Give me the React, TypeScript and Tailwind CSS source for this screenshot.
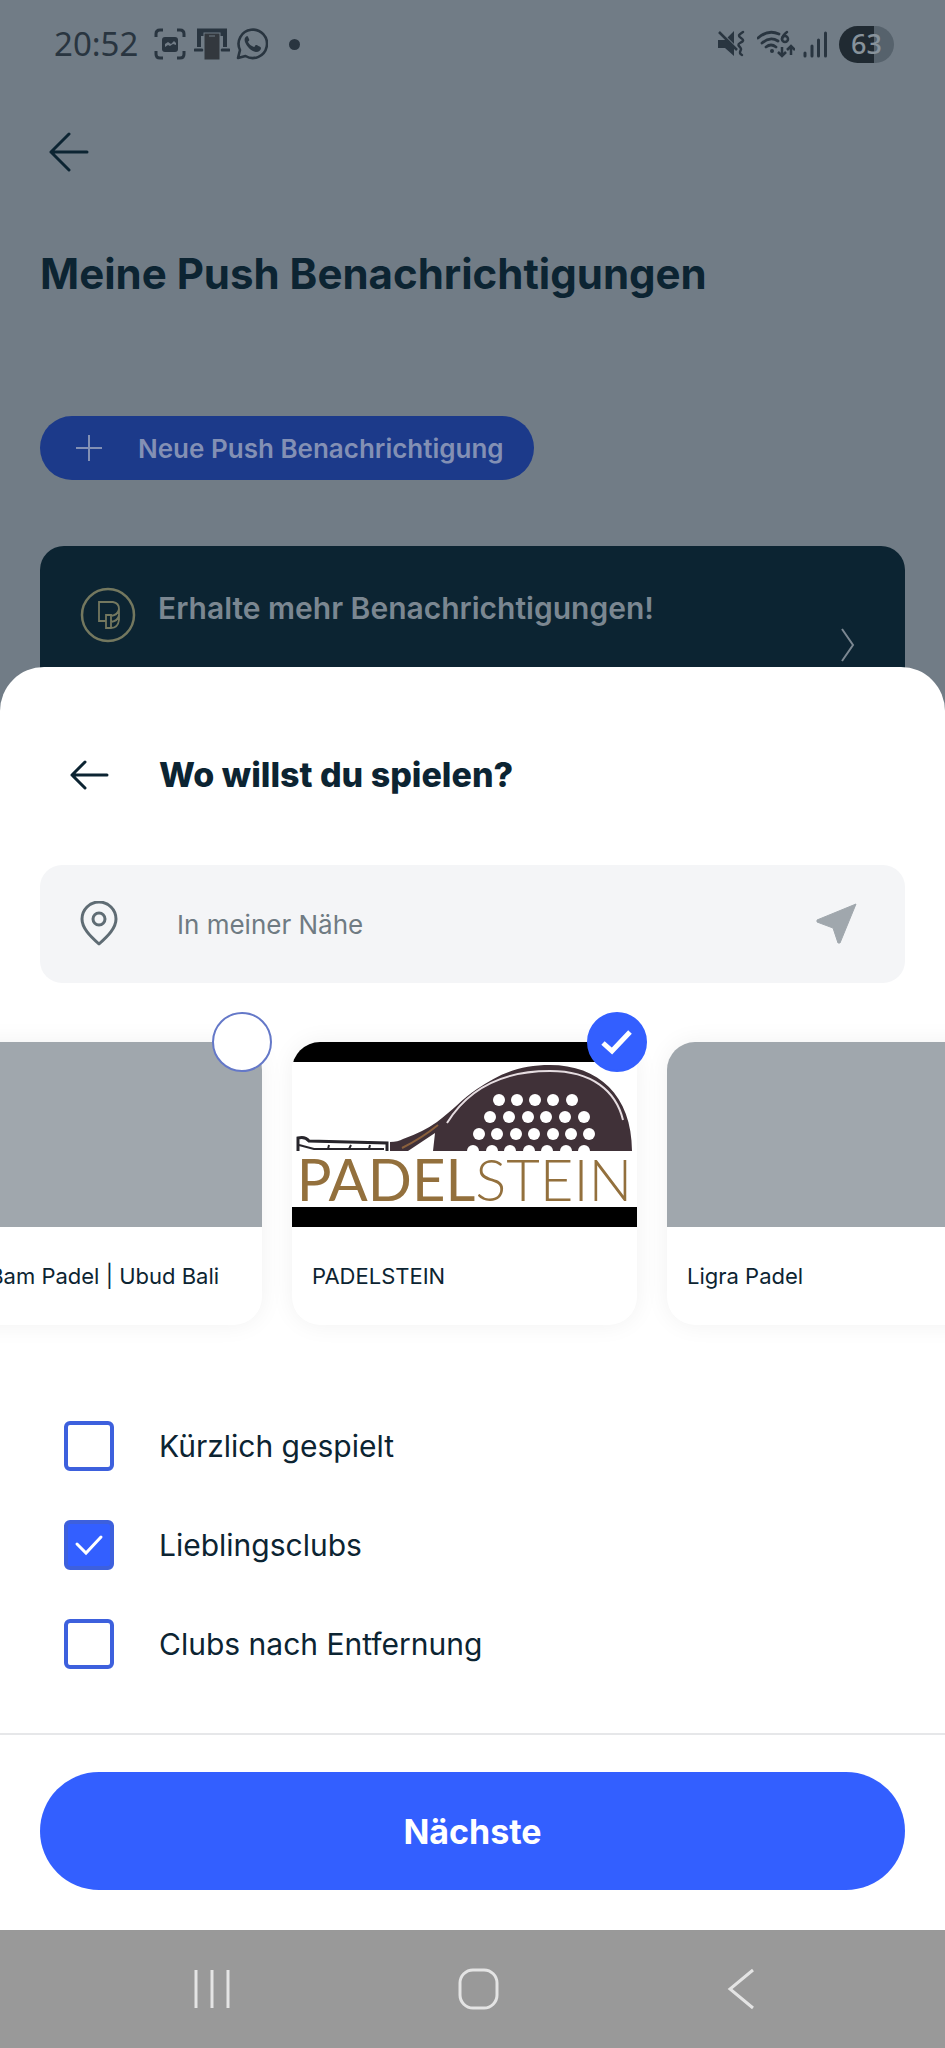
import React from "react";

const clubs = [
  { name: "Bam Bam Padel | Ubud Bali", selected: false, logo: false },
  { name: "PADELSTEIN", selected: true, logo: true },
  { name: "Ligra Padel", selected: false, logo: false },
];

const filters = [
  { id: "recent", label: "Kürzlich gespielt", checked: false },
  { id: "favorites", label: "Lieblingsclubs", checked: true },
  { id: "distance", label: "Clubs nach Entfernung", checked: false },
];

const holeRows = [
  { y: 58, xs: [207, 225, 243, 261, 280] },
  { y: 75, xs: [198, 217, 236, 254, 273, 292] },
  { y: 92, xs: [187, 205, 224, 242, 261, 279, 297] },
  { y: 109, xs: [181, 200, 218, 237, 255, 274, 292] },
];

const StatusBar = () => (
  <div className="flex h-[88px] items-center justify-between pl-[54px] pr-[51px] text-[#293540]">
    <div className="flex items-center">
      <span className="w-[84px] font-['Noto_Sans'] text-[33px] leading-[40px]">20:52</span>
      <svg className="ml-4 h-8 w-8" viewBox="0 0 32 32" fill="none">
        <path
          d="M2 9V6q0-4 4-4h3M23 2h3q4 0 4 4v3M30 23v3q0 4-4 4h-3M9 30H6q-4 0-4-4v-3"
          stroke="currentColor"
          strokeWidth="3"
        />
        <rect x="8" y="9" width="16" height="15" rx="3" fill="currentColor" />
        <path d="M11 19v-3l3-2 3 2 3-3 2 2v2l-3-1-3 2-2-1z" fill="#717c86" />
      </svg>
      <svg className="ml-2 h-8 w-9" viewBox="0 0 36 32" fill="none">
        <path d="M5 19V2.500h26V19" stroke="currentColor" strokeWidth="4" />
        <path d="M5 3h26v5H5z" fill="currentColor" />
        <path d="M1 22h7M28 22h7" stroke="currentColor" strokeWidth="3" strokeLinecap="round" />
        <rect x="10" y="5" width="16" height="27" fill="#33383e" stroke="#717c86" strokeWidth="1" />
        <path d="M15 8h6" stroke="#717c86" strokeWidth="1" />
      </svg>
      <svg className="ml-[6px] h-8 w-8" viewBox="0 0 32 32" fill="none">
        <path
          d="M2 30l2-8A14.200 14.200 0 1 1 9.500 28z"
          stroke="currentColor"
          strokeWidth="2.600"
          strokeLinejoin="round"
        />
        <path
          d="M11 8c-2 1-3 3-2 6 2 5 6 9 11 10 3 0 5-2 5-4 0-1-4-3-5-3s-1 2-2 2c-3-1-5-3-6-5 0-1 2-1 1-3-1-2-1-3-2-3z"
          fill="currentColor"
        />
      </svg>
      <span className="ml-[21px] size-[11px] rounded-full bg-current" />
    </div>

    <div className="flex items-center">
      <svg className="h-7 w-7" viewBox="0 0 28 28" fill="none">
        <path d="M1 10h7l9-9v25l-9-8H1z" fill="currentColor" />
        <path d="M0-1l20 20" stroke="#717c86" strokeWidth="3" />
        <path d="M2 2l18 18" stroke="currentColor" strokeWidth="2.500" />
        <path
          d="M26 2c-5 3-5 4-2 6s3 3-1 5 1 4 1 6-3 4 1 6"
          stroke="currentColor"
          strokeWidth="2.500"
          strokeLinecap="round"
        />
      </svg>
      <svg className="ml-3 h-7 w-[38px]" viewBox="0 0 38 28" fill="none" stroke="currentColor">
        <path d="M1 8Q11-1 22 4M5 13q8-7 16-2M9 17q5-4 10 0" strokeWidth="2.800" strokeLinecap="round" />
        <circle cx="15" cy="21" r="2" fill="currentColor" stroke="none" />
        <path d="M30 2q-5 4-5 7" strokeWidth="2.500" strokeLinecap="round" />
        <circle cx="28" cy="9" r="3" strokeWidth="2.500" />
        <path d="M25 17v9m-4-4l4 4 4-4M34 25v-9m-4 4l4-4 4 4" strokeWidth="2.500" />
      </svg>
      <svg className="ml-2 h-7 w-6" viewBox="0 0 24 28" stroke="currentColor" strokeWidth="3" strokeLinecap="round">
        <path d="M2 23v3M9 16v10M15.500 10v16M22.500 3v23" />
      </svg>
      <span className="ml-3 flex h-[37px] w-[55px] items-center justify-center rounded-full bg-linear-to-r from-[#202a32] from-63% to-[#56626c] to-63% font-['Noto_Sans'] text-[27px] font-medium text-[#87929b]">
        63
      </span>
    </div>
  </div>
);

const PadelsteinLogo = () => (
  <div className="flex h-full flex-col justify-between bg-white">
    <div className="h-5 bg-black" />
    <svg className="h-[89px] w-full" viewBox="0 20 345 89">
      <path
        d="M98 100q8 0 13-3 20-7 34-17c16-12 24-22 40-33 23-16 44-24 73-24 48 0 82 30 82 86H141l2-18-27 18H98z"
        fill="#403138"
      />
      <path d="M155 81C176 47 211 29 258 29c42 0 66 20 73 49" fill="none" stroke="#e6dde1" strokeWidth="2" />
      <path d="M110 106q20-10 36-23" fill="none" stroke="#8a603c" strokeWidth="2" />
      <path
        d="M6 109V96q7-2 11 3l78 2v8"
        fill="#fff"
        stroke="#27252b"
        strokeWidth="3"
      />
      <path d="M7 103l15 4h70M36 107l1-4M57 107l2-4M77 107l1-4" fill="none" stroke="#27252b" strokeWidth="2" />
      {holeRows.map((row) =>
        row.xs.map((x) => <circle key={`${row.y}-${x}`} cx={x} cy={row.y} r="6" fill="#fff" />)
      )}
    </svg>
    <div className="text-center font-['Lato'] text-[58px] font-normal leading-[56px] whitespace-nowrap text-[#93703d]">
      PADEL<span className="font-light">STEIN</span>
    </div>
    <div className="h-5 bg-black" />
  </div>
);

const ClubCard = ({ club }: { club: (typeof clubs)[number] }) => (
  <label className="relative w-[345px] shrink-0 rounded-[28px] bg-white shadow-[0_0_24px_rgba(0,0,0,0.06)]">
    <div className="h-[185px] overflow-hidden rounded-t-[28px] bg-[#a0a7ad]">
      {club.logo && <PadelsteinLogo />}
    </div>
    <div className="flex h-[98px] items-center pl-5 text-[22px] whitespace-nowrap">{club.name}</div>
    <input
      type="checkbox"
      defaultChecked={club.selected}
      className="peer absolute -top-[30px] -right-[10px] size-[60px] appearance-none rounded-full border-2 border-[#6478c8] bg-white checked:border-[#335fff] checked:bg-[#335fff]"
    />
    <svg
      className="pointer-events-none absolute -top-[30px] -right-[10px] hidden size-[60px] peer-checked:block"
      viewBox="0 0 60 60"
      fill="none"
    >
      <path d="M16 31l9 8 18-19" stroke="#fff" strokeWidth="5" />
    </svg>
  </label>
);

const App: React.FC = () => {
  return (
    <div className="flex min-h-screen flex-col overflow-hidden bg-[#717c86] font-['Inter',sans-serif] text-[#0c2432]">
      <StatusBar />

      <header className="px-10">
        <button type="button" aria-label="Zurück" className="mt-[44px] ml-[9px] block">
          <svg
            className="size-10"
            viewBox="0 0 40 40"
            fill="none"
            stroke="currentColor"
            strokeWidth="3"
            strokeLinecap="round"
            strokeLinejoin="round"
          >
            <path d="M38 20H2M20 2L2 20l18 18" />
          </svg>
        </button>
        <h1 className="mt-[76px] text-[42px] font-bold leading-[52px]">Meine Push Benachrichtigungen</h1>
        <button
          type="button"
          className="mt-[116px] flex h-16 items-center rounded-full bg-[#1c3a8a] pr-[30px] pl-9 text-[#8390b4]"
        >
          <svg className="size-[26px]" viewBox="0 0 26 26" stroke="currentColor" strokeWidth="2">
            <path d="M13 0v26M0 13h26" />
          </svg>
          <span className="ml-9 text-[26px] font-semibold">Neue Push Benachrichtigung</span>
        </button>
      </header>

      <section className="mx-10 mt-[66px] flex h-[166px] rounded-[24px] bg-[#0c2432] pr-[50px] pl-10 text-[#7b8791]">
        <svg className="mt-[41px] size-14 text-[#74785f]" viewBox="0 0 56 56" fill="none" stroke="currentColor">
          <circle cx="28" cy="28" r="26" strokeWidth="2.500" />
          <path
            d="M26 34h-7V15h14q6 1 6 7v11q-1 8-8 8h-5V28h5v13M31 29q7-1 8-7M31 35q7-1 8-7"
            strokeWidth="1.800"
          />
        </svg>
        <h2 className="mt-[42px] ml-[22px] text-[30px] font-semibold leading-[40px]">
          Erhalte mehr Benachrichtigungen!
        </h2>
        <svg className="mt-[82px] ml-auto h-[34px] w-[14px]" viewBox="0 0 14 34" fill="none">
          <path d="M1 1l11 16L1 33" stroke="currentColor" strokeWidth="2" />
        </svg>
      </section>

      <main className="relative -mt-[45px] flex flex-1 flex-col rounded-t-[44px] bg-white">
        <div className="flex items-center px-[69px] pt-[84px]">
          <button type="button" aria-label="Zurück">
            <svg
              className="h-[30px] w-10"
              viewBox="0 0 40 30"
              fill="none"
              stroke="currentColor"
              strokeWidth="3"
              strokeLinecap="round"
              strokeLinejoin="round"
            >
              <path d="M38 15H3M16 2L3 15l13 13" />
            </svg>
          </button>
          <h2 className="ml-[50px] text-[34px] font-extrabold leading-[48px]">Wo willst du spielen?</h2>
        </div>

        <div className="mx-10 mt-[66px] flex h-[118px] items-center rounded-[22px] bg-[#f4f5f7] pr-12 pl-10">
          <svg className="h-[46px] w-[38px]" viewBox="0 0 38 46" fill="none" stroke="#5f6c74" strokeWidth="3">
            <path d="M19 43C10 35 2 27 2 18a17 17 0 0 1 34 0c0 9-8 17-17 25z" strokeLinejoin="round" />
            <circle cx="19" cy="18" r="6" />
          </svg>
          <input
            type="text"
            aria-label="Ort"
            placeholder="In meiner Nähe"
            className="ml-[59px] min-w-0 flex-1 text-[26px] placeholder:text-[#6f7b83] focus:outline-none"
          />
          <button type="button" aria-label="Standort verwenden">
            <svg className="size-[42px]" viewBox="0 0 42 42" fill="#a0a7ad" stroke="#a0a7ad" strokeLinejoin="round">
              <path d="M41 1L25 40h-2l-5-15-16-6v-2z" />
            </svg>
          </button>
        </div>

        <div className="mt-[59px] flex justify-center gap-[30px] pr-4">
          {clubs.map((club) => (
            <ClubCard key={club.name} club={club} />
          ))}
        </div>

        <div className="mt-[71px] flex flex-col px-16">
          {filters.map((item) => (
            <div key={item.id} className="relative flex h-[99px] items-center">
              <input
                id={item.id}
                type="checkbox"
                defaultChecked={item.checked}
                className="peer size-[50px] appearance-none rounded-md border-4 border-[#3d60dd] bg-white checked:bg-[#335fff]"
              />
              <svg
                className="pointer-events-none absolute left-0 hidden size-[50px] peer-checked:block"
                viewBox="0 0 50 50"
                fill="none"
              >
                <path d="M13 24l9 9 15-16" stroke="#fff" strokeWidth="3" strokeLinecap="round" />
              </svg>
              <label htmlFor={item.id} className="ml-[45px] text-[30px] leading-[40px]">
                {item.label}
              </label>
            </div>
          ))}
        </div>

        <div className="mt-auto border-t-2 border-[#e6e7e9] px-10 pt-[37px] pb-10">
          <button type="button" className="h-[118px] w-full rounded-full bg-[#335fff] text-[34px] font-bold text-white">
            Nächste
          </button>
        </div>
      </main>

      <nav className="flex h-[118px] items-center justify-between bg-[#999999] pr-[190px] pl-[194px] text-[#e4e4e4]">
        <button type="button" aria-label="Letzte Apps">
          <svg className="h-10 w-9" viewBox="0 0 36 40" stroke="currentColor" strokeWidth="3">
            <path d="M2 1v38M18 1v38M34 1v38" />
          </svg>
        </button>
        <button type="button" aria-label="Startseite">
          <svg className="size-[42px]" viewBox="0 0 42 42" fill="none" stroke="currentColor" strokeWidth="3">
            <rect x="2" y="2" width="37" height="38" rx="13" />
          </svg>
        </button>
        <button type="button" aria-label="Zurück">
          <svg className="h-[42px] w-[28px]" viewBox="0 0 28 42" fill="none" stroke="currentColor" strokeWidth="3">
            <path d="M26 2L3 21l23 19" />
          </svg>
        </button>
      </nav>
    </div>
  );
};

export default App;
